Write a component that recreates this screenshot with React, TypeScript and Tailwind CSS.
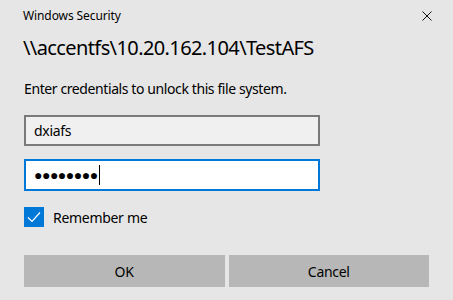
import React from "react";

export default function App() {
  return (
    <div
      className="w-[453px] h-[300px] bg-[#e6e6e6] text-black relative overflow-hidden"
      style={{ fontFamily: '"Noto Sans", "Open Sans", sans-serif' }}
    >
      <div className="flex flex-col px-[24px]">
        <div className="h-[32px] flex items-center justify-between">
          <span className="text-[12px] -ml-[1px] tracking-[-0.1px]">Windows Security</span>
          <svg width="10" height="10" viewBox="0 0 10 10" className="mr-[-3px]">
            <path d="M0.5 0.5 L9.5 9.5 M9.5 0.5 L0.5 9.5" stroke="#111" strokeWidth="1" />
          </svg>
        </div>
        <div className="h-[32px] flex items-center text-[20px] -ml-[1px] leading-none tracking-[-0.6px]">
          \\accentfs\10.20.162.104\TestAFS
        </div>
        <div className="mt-[8px] h-[32px] flex items-center text-[14px] tracking-[-0.4px]">
          Enter credentials to unlock this file system.
        </div>
        <div className="mt-[11px] w-[296px] h-[31px] border-2 border-[#7a7a7a] bg-[#f0f0f0] flex items-center px-[8px] text-[14px] tracking-[-0.3px]">
          dxiafs
        </div>
        <div className="mt-[13px] w-[296px] h-[32px] border-2 border-[#0078d7] bg-white flex items-center px-[8px]">
          <span className="tracking-[-0.5px] text-[14px] leading-none">●●●●●●●●</span>
          <span className="w-[1px] h-[20px] bg-black ml-[1px]" />
        </div>
        <div className="mt-[16px] flex items-center h-[20px]">
          <div className="w-[20px] h-[20px] bg-[#0078d7] flex items-center justify-center">
            <svg width="14" height="12" viewBox="0 0 14 12">
              <path d="M1 6.5 L5 10.5 L13 1.5" stroke="white" strokeWidth="1.2" fill="none" />
            </svg>
          </div>
          <span className="ml-[9px] text-[14px] tracking-[-0.3px]">Remember me</span>
        </div>
        <div className="mt-[28px] flex gap-[4px]">
          <div className="w-[201px] h-[32px] bg-[#b7b7b7] flex items-center justify-center text-[14px]">OK</div>
          <div className="w-[201px] h-[32px] bg-[#b7b7b7] flex items-center justify-center text-[14px] tracking-[-0.3px]">Cancel</div>
        </div>
      </div>
    </div>
  );
}
